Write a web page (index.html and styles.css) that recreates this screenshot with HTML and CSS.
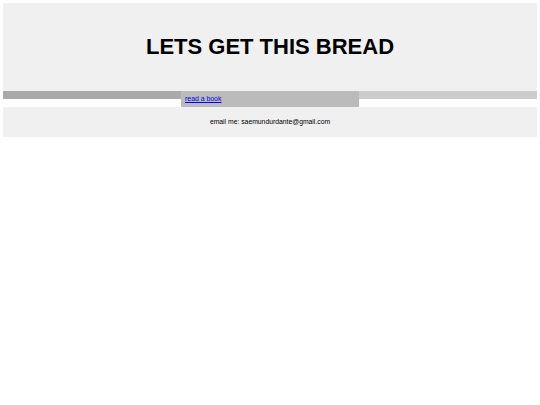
FILE: index.html
```html
<!DOCTYPE html>
<html lang="en">
<head>
<meta charset="utf-8">
<title>LETS GET THIS BREAD</title>
<link rel="stylesheet" href="styles.css">
</head>
<body>
<header class="site-header">
  <h1 class="title">LETS GET THIS BREAD</h1>
</header>
<nav class="nav">
  <div class="nav-cell nav-left"></div>
  <div class="nav-cell nav-mid"><a href="#" class="nav-link">read a book</a></div>
  <div class="nav-cell nav-right"></div>
</nav>
<footer class="site-footer">
  <p class="contact">email me: saemundurdante@gmail.com</p>
</footer>
</body>
</html>
```

FILE: styles.css
```css
html, body {
  background: #ffffff;
}
body {
  margin: 3px;
  font-family: "Liberation Sans", Arial, sans-serif;
  color: #000;
}
.site-header {
  height: 88px;
  background: #f0f0f0;
  display: flex;
  align-items: center;
  justify-content: center;
}
.title {
  margin: 0;
  font-size: 22px;
  font-weight: bold;
  line-height: 1;
}
.nav {
  display: grid;
  grid-template-columns: 1fr 1fr 1fr;
  align-items: start;
}
.nav-cell {
  padding: 4px;
}
.nav-left { background: #aaaaaa; }
.nav-mid { background: #bbbbbb; }
.nav-right { background: #cccccc; }
.nav-link {
  display: block;
  font-size: 6.9px;
  line-height: 8px;
  color: #0000ee;
  text-decoration: underline;
}
.site-footer {
  height: 30px;
  background: #f0f0f0;
  display: flex;
  align-items: center;
  justify-content: center;
}
.contact {
  margin: 0;
  font-size: 6.8px;
  line-height: 8px;
}
```
